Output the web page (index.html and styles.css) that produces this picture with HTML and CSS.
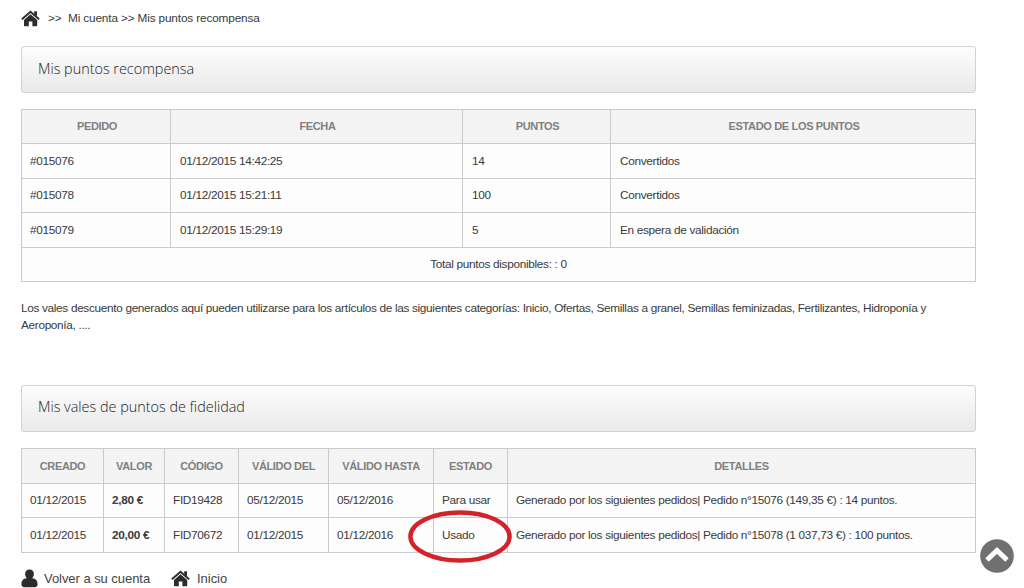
FILE: index.html
```
<!DOCTYPE html>
<html lang="es">
<head>
<meta charset="utf-8">
<title>Mis puntos recompensa</title>
<link rel="stylesheet" href="styles.css">
</head>
<body>
<svg class="defs" width="0" height="0" aria-hidden="true">
  <symbol id="home" viewBox="0 0 19 17">
    <path d="M9.5 4.3 16.2 10.1V15.5Q16.2 16.3 15.4 16.3H11.4V11.5H7.8V16.3H3.8Q3 16.3 3 15.5V10.1Z"/>
    <path d="M.9 9.2 9.5 1.7 18.1 9.2" fill="none" stroke="currentColor" stroke-width="1.9"/>
    <path d="M13.2 1.2H16V6.3L13.2 3.9Z"/>
  </symbol>
</svg>
<main class="page">
  <nav class="breadcrumb">
    <a class="crumb-home"><svg class="icon-home"><use href="#home"/></svg></a>
    <span class="separator">&gt;&gt;</span>
    <span class="crumb-path">Mi cuenta &gt;&gt; Mis puntos recompensa</span>
  </nav>

  <h1 class="heading heading-points"><span>Mis puntos recompensa</span></h1>

  <table class="grid points">
    <colgroup><col class="p-order"><col class="p-date"><col class="p-points"><col class="p-state"></colgroup>
    <thead>
      <tr><th>PEDIDO</th><th>FECHA</th><th>PUNTOS</th><th>ESTADO DE LOS PUNTOS</th></tr>
    </thead>
    <tbody>
      <tr class="tall"><td>#015076</td><td>01/12/2015 14:42:25</td><td>14</td><td>Convertidos</td></tr>
      <tr><td>#015078</td><td>01/12/2015 15:21:11</td><td>100</td><td>Convertidos</td></tr>
      <tr class="tall"><td>#015079</td><td>01/12/2015 15:29:19</td><td>5</td><td>En espera de validación</td></tr>
      <tr><td class="total" colspan="4">Total puntos disponibles: : 0</td></tr>
    </tbody>
  </table>

  <p class="note">Los vales descuento generados aquí pueden utilizarse para los artículos de las siguientes categorías: Inicio, Ofertas, Semillas a granel, Semillas feminizadas, Fertilizantes, Hidroponía y<br>Aeroponía, ....</p>

  <h2 class="heading"><span>Mis vales de puntos de fidelidad</span></h2>

  <table class="grid vouchers">
    <colgroup><col class="v-created"><col class="v-value"><col class="v-code"><col class="v-from"><col class="v-until"><col class="v-state"><col class="v-details"></colgroup>
    <thead>
      <tr class="tall"><th>CREADO</th><th>VALOR</th><th>CÓDIGO</th><th>VÁLIDO DEL</th><th>VÁLIDO HASTA</th><th>ESTADO</th><th>DETALLES</th></tr>
    </thead>
    <tbody>
      <tr><td>01/12/2015</td><td><b>2,80 €</b></td><td>FID19428</td><td>05/12/2015</td><td>05/12/2016</td><td>Para usar</td><td>Generado por los siguientes pedidos| Pedido n°15076 (149,35 €) : 14 puntos.</td></tr>
      <tr class="tall"><td>01/12/2015</td><td><b>20,00 €</b></td><td>FID70672</td><td>01/12/2015</td><td>01/12/2016</td><td class="marked">Usado<svg class="marker" viewBox="0 0 104 53"><ellipse cx="52" cy="26.5" rx="49.6" ry="24"/></svg></td><td>Generado por los siguientes pedidos| Pedido n°15078 (1 037,73 €) : 100 puntos.</td></tr>
    </tbody>
  </table>

  <footer class="links">
    <a class="link"><svg class="icon-user" viewBox="0 0 17 19"><path d="M8.5.6C11.3.6 12.9 2.7 12.9 5.1 12.9 6.7 12.2 8.2 11.2 9.2 15.2 9.4 16.6 12.1 16.6 15.3 16.6 17.3 15.3 18.3 13.7 18.3H3.3C1.7 18.3.4 17.3.4 15.3.4 12.1 1.8 9.4 5.8 9.2 4.8 8.2 4.1 6.7 4.1 5.1 4.1 2.7 5.7.6 8.5.6Z"/></svg><span class="link-account">Volver a su cuenta</span></a>
    <a class="link"><svg class="icon-home"><use href="#home"/></svg><span class="link-start">Inicio</span></a>
  </footer>
</main>
<a class="to-top"><svg viewBox="0 0 34 34"><circle cx="17" cy="17" r="16.8"/><path d="M7 21 17 11.4 27 21"/></svg></a>
</body>
</html>
```
FILE: styles.css
```
* { box-sizing: border-box; }
body {
  margin: 0;
  height: 588px;
  overflow: hidden;
  background: #fefefe;
  color: #3a3a3a;
  font: 11.8px/17px "Liberation Sans", Arial, sans-serif;
}
.defs { position: absolute; }
.page { width: 976px; padding: 9px 0 0 21px; }
.breadcrumb { display: flex; align-items: center; height: 19px; margin-bottom: 18px; letter-spacing: -0.15px; white-space: nowrap; }
.crumb-home { display: flex; }
.icon-home { width: 19px; height: 17px; fill: currentColor; color: #2c2c2c; }
.separator { margin-left: 8px; width: 20px; }
.heading {
  display: flex;
  align-items: center;
  height: 47px;
  margin: 0;
  padding: 0 16px 3px;
  border: 1px solid #d2d2d2;
  border-radius: 3px;
  background: linear-gradient(#fdfdfd, #e9e9e9);
  color: #222;
  font: 300 14.4px/18px "Open Sans", sans-serif;
  width: 955px;
}
.heading-points { padding-bottom: 1px; }
.grid {
  width: 955px;
  margin-top: 16px;
  table-layout: fixed;
  border-collapse: collapse;
  background: #fdfdfd;
  letter-spacing: -0.31px;
}
.grid tr { height: 34px; }
.grid tr.tall { height: 35px; }
.grid th, .grid td { border: 1px solid #cbcbcb; padding: 0 8px; white-space: nowrap; text-align: left; }
.grid th { background: #f4f4f4; color: #808080; font-size: 11px; letter-spacing: -0.34px; text-align: center; }
.points th { padding-left: 10px; }
.points td + td { padding-left: 9px; }
.grid .total { text-align: center; }
.p-order { width: 149px; }
.p-date { width: 292px; }
.p-points { width: 148px; }
.p-state { width: 365px; }
.v-created { width: 82px; }
.v-value { width: 61px; }
.v-code { width: 74px; }
.v-from { width: 90px; }
.v-until { width: 105px; }
.v-state { width: 74px; }
.v-details { width: 468px; }
.note { margin: 18px 0 51px; letter-spacing: -0.322px; white-space: nowrap; }
.marked { position: relative; }
.marker { position: absolute; left: -26px; top: -8px; width: 104px; height: 53px; fill: none; stroke: #d2232a; stroke-width: 4.4; z-index: 1; }
.links { display: flex; gap: 21px; margin-top: 14px; color: #444; font-size: 13px; letter-spacing: -0.05px; }
.link { display: flex; align-items: center; height: 22px; white-space: nowrap; }
.icon-user { width: 17px; height: 19px; margin-right: 6px; fill: #2c2c2c; }
.link .icon-home { margin-right: 7px; }
.to-top { position: fixed; left: 980px; top: 539px; width: 34px; height: 34px; }
.to-top svg { display: block; fill: #707070; }
.to-top path { fill: none; stroke: #fff; stroke-width: 5; }
```
